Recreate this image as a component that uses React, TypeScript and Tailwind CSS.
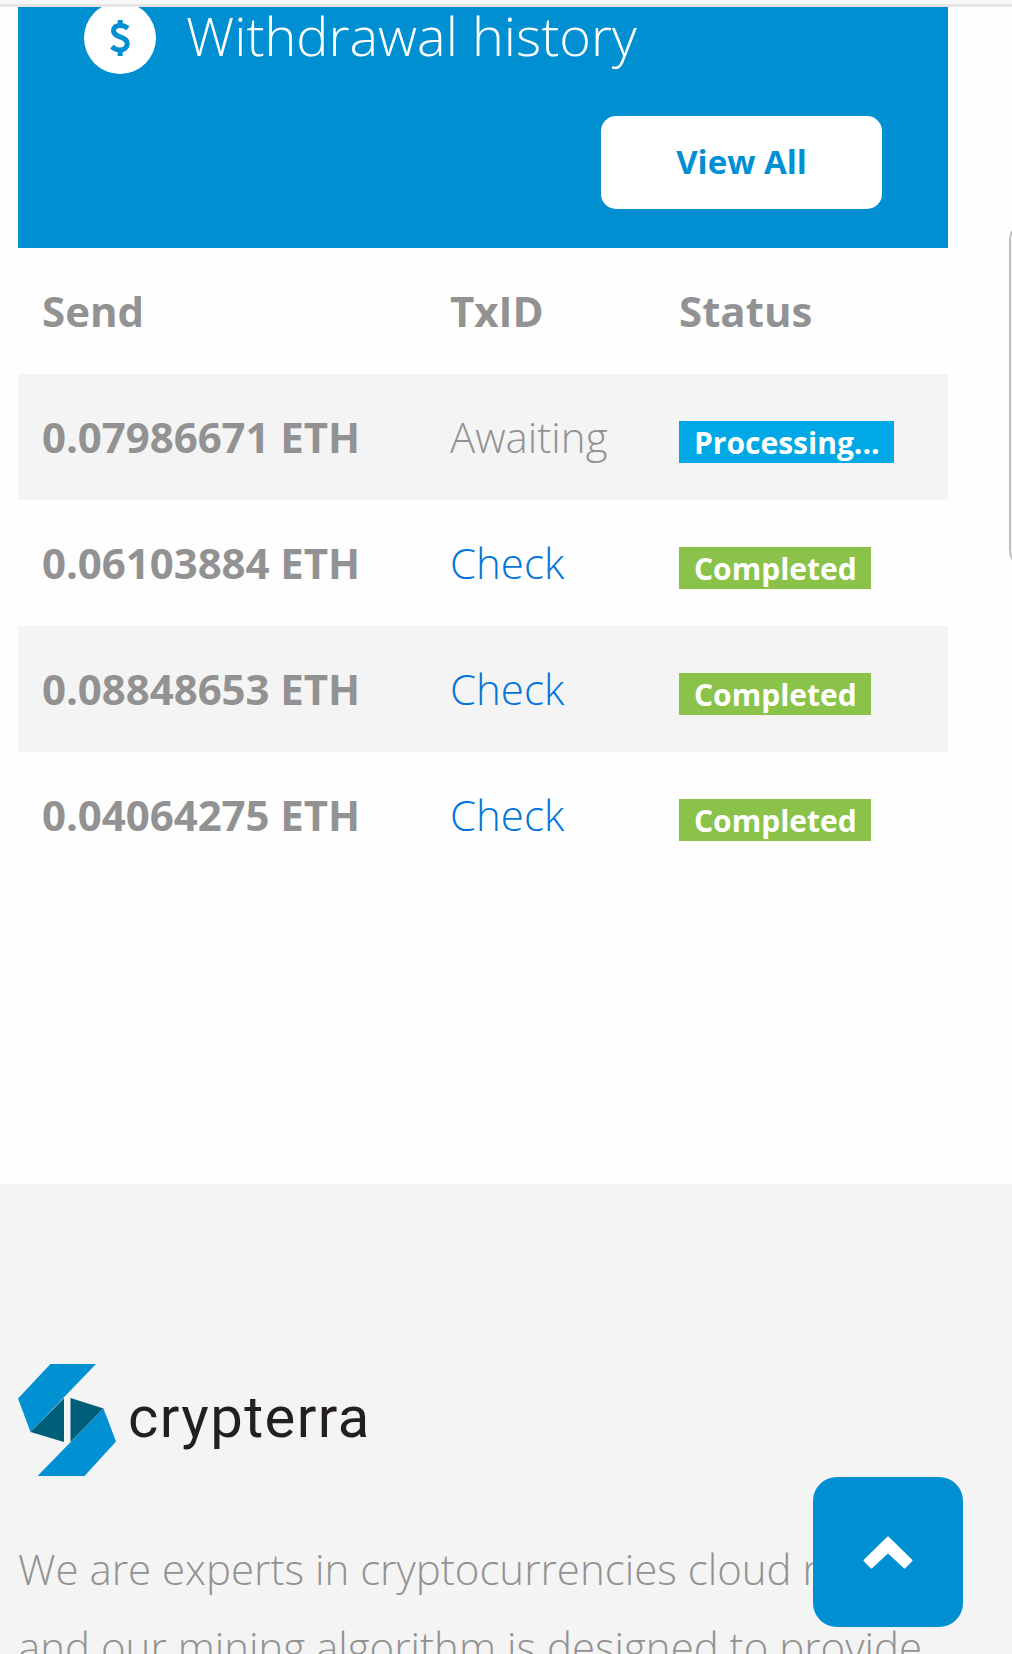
import React from "react";

type Row = { amount: string; tx: string; status: string };

const rows: Row[] = [
  { amount: "0.07986671 ETH", tx: "Awaiting", status: "Processing..." },
  { amount: "0.06103884 ETH", tx: "Check", status: "Completed" },
  { amount: "0.08848653 ETH", tx: "Check", status: "Completed" },
  { amount: "0.04064275 ETH", tx: "Check", status: "Completed" },
];

const columns = "grid h-[126px] grid-cols-[408px_229px_1fr] items-center pl-6 pb-0.5";

function DollarBadge() {
  return (
    <svg className="size-[72px] shrink-0" viewBox="0 0 72 72">
      <circle cx="36" cy="36" r="36" fill="#fff" />
      <path
        d="M44 26.200C41.500 24.200 39 23.400 36.200 23.400C32 23.400 29.500 25.400 29.500 28.600C29.500 36.200 43.200 33.400 43.200 41.600C43.200 45.800 40 48 36 48C32.800 48 30.200 46.800 27.800 44.600M36.200 18V24M36.200 47V54"
        fill="none"
        stroke="#008fd1"
        strokeWidth="5"
      />
    </svg>
  );
}

function LogoMark() {
  return (
    <svg className="h-[112px] w-[98px] shrink-0" viewBox="0 0 98 112">
      <path d="M32.500 0H78L12.500 68L0 34.500Z" fill="#0091d2" />
      <path d="M46 34V78L12.500 68Z" fill="#005f78" />
      <path d="M52.500 34L85.500 44.500L52.500 78Z" fill="#005f78" />
      <path d="M85.500 44.500L98 77.500L66.500 112H19.500Z" fill="#0091d2" />
    </svg>
  );
}

export default function App() {
  return (
    <div className="relative flex h-[1654px] w-[1012px] flex-col overflow-hidden bg-[#fefefe] font-['Open_Sans',sans-serif] text-[42px] text-[#929292]">
      <div className="h-[7px] shrink-0 border-b-[3px] border-[#e6e6e6] bg-[#f8f8f8]" />

      <section className="ml-[18px] h-[241px] w-[930px] shrink-0 overflow-hidden bg-[#008fd1]">
        <div className="-mt-[5px] flex h-[72px] items-center gap-[30px] pl-[66px]">
          <DollarBadge />
          <h1 className="pb-[6px] text-[54px] leading-[72px] font-light whitespace-nowrap text-white">
            Withdrawal history
          </h1>
        </div>
        <div className="mt-[42px] flex justify-end pr-[66px]">
          <button className="h-[93px] w-[281px] rounded-[15px] bg-white pb-0.5 text-[33px] font-bold text-[#008fd1]">
            View All
          </button>
        </div>
      </section>

      <section className="ml-[18px] w-[930px] shrink-0">
        <div className={columns + " font-bold"}>
          <span>Send</span>
          <span>TxID</span>
          <span>Status</span>
        </div>
        {rows.map((row) => (
          <div key={row.amount} className={columns + " even:bg-[#f4f4f4]"}>
            <span className="font-bold tracking-[-0.06px]">{row.amount}</span>
            <span className={row.tx === "Check" ? "font-light text-[#0275d8]" : "font-light"}>{row.tx}</span>
            <span
              className={
                "mt-3 flex h-[42px] items-center justify-self-start pt-px pr-[14px] pl-[15px] text-[30px] font-bold text-white " +
                (row.status === "Completed" ? "bg-[#8bc34a]" : "bg-[#00a8e6]")
              }
            >
              {row.status}
            </span>
          </div>
        ))}
      </section>

      <footer className="mt-[306px] flex-1 bg-[#f4f4f4] pt-[180px] pl-[18px]">
        <div className="flex h-[112px] items-center gap-3">
          <LogoMark />
          <span className="mt-[-6px] font-['Roboto'] text-[58px] leading-none tracking-[1.4px] text-[#231f20]">
            crypterra
          </span>
        </div>
        <p className="mt-[54px] text-[42px] leading-[78px] font-light whitespace-nowrap">
          We are experts in cryptocurrencies cloud mining,
          <br />
          and our mining algorithm is designed to provide
        </p>
      </footer>

      <button
        aria-label="Back to top"
        className="absolute top-[1477px] left-[813px] flex size-[150px] items-center justify-center rounded-[24px] bg-[#008fd1] pt-0.5"
      >
        <svg className="h-[34px] w-[50px]" viewBox="0 0 50 34">
          <path
            d="M25 1.500L48.500 24.500L41.500 31.500L25 16L8.500 31.500L1.500 24.500Z"
            fill="#fff"
            stroke="#fff"
            strokeWidth="2"
            strokeLinejoin="round"
          />
        </svg>
      </button>

      <div className="absolute top-[220px] left-[1009px] h-[350px] w-[40px] rounded-[20px] border-2 border-[#bdbdbd] bg-[#fefefe]" />
    </div>
  );
}
